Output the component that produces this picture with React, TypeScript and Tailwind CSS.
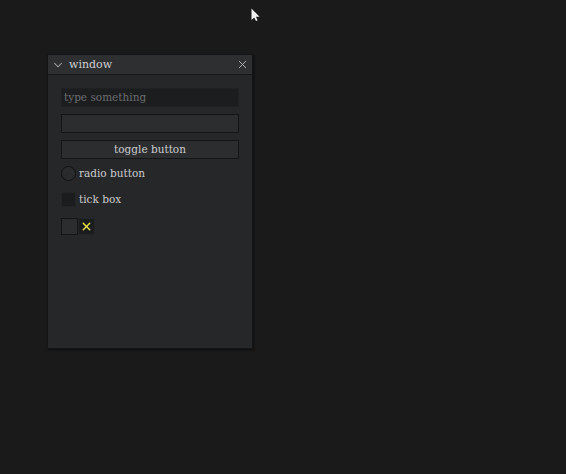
import { ChevronDown, X } from 'lucide-react';

export default function App() {
  const font = { fontFamily: '"DejaVu Serif", "Liberation Serif", serif' };
  return (
    <div className="relative w-[566px] h-[474px] bg-[#1a1a1a] overflow-hidden" style={font}>
      {/* mouse cursor */}
      <svg className="absolute left-[251px] top-[8px]" width="9" height="14" viewBox="0 0 9 14">
        <path d="M0.5 0.5 L0.5 12 L3.2 9.4 L5 13 L6.6 12.2 L4.9 8.8 L8.5 8.8 Z" fill="#f2f2f2" />
      </svg>

      <div className="absolute left-[47px] top-[54px] w-[206px] h-[295px] flex flex-col bg-[#262729] border border-[#141516] shadow-[1px_1px_2px_rgba(0,0,0,0.5)]">
        {/* title bar */}
        <div className="h-[20px] flex items-center bg-[#2e2f31] border-b border-[#151617] px-[3px]">
          <ChevronDown className="w-[14px] h-[14px] text-[#a9abad]" strokeWidth={1.8} />
          <span className="ml-[4px] text-[11px] text-[#cfd0d2] leading-none">window</span>
          <div className="flex-1" />
          <X className="w-[13px] h-[13px] text-[#b0b2b4]" strokeWidth={1.8} />
        </div>

        {/* body */}
        <div className="flex flex-col px-[13px] pt-[13px] gap-[7px]">
          <div className="h-[19px] bg-[#1c1d1f] border border-[#202123] flex items-center px-[2px]">
            <span className="text-[10.5px] text-[#6c6e70] leading-none">type something</span>
          </div>
          <div className="h-[19px] bg-[#2c2d2f] border border-[#141516]" />
          <div className="h-[19px] bg-[#2c2d2f] border border-[#141516] flex items-center justify-center">
            <span className="text-[10.5px] text-[#cbcccd] leading-none">toggle button</span>
          </div>

          <div className="flex items-center gap-[3px]">
            <div className="w-[15px] h-[15px] rounded-full border-[1.5px] border-[#111213] bg-[#2a2b2d]" />
            <span className="text-[10.5px] text-[#cbcccd] leading-none">radio button</span>
          </div>

          <div className="flex items-center gap-[3px] mt-[4px]">
            <div className="w-[15px] h-[15px] bg-[#1b1c1e] border border-[#242527]" />
            <span className="text-[10.5px] text-[#cbcccd] leading-none">tick box</span>
          </div>

          <div className="flex items-center mt-[4px]">
            <div className="w-[17px] h-[17px] bg-[#2c2d2f] border border-[#141516]" />
            <div className="w-[17px] h-[17px] bg-[#1b1c1e] border border-[#242527] flex items-center justify-center">
              <X className="w-[13px] h-[13px] text-[#f0e84a]" strokeWidth={2.6} />
            </div>
          </div>
        </div>
      </div>
    </div>
  );
}
